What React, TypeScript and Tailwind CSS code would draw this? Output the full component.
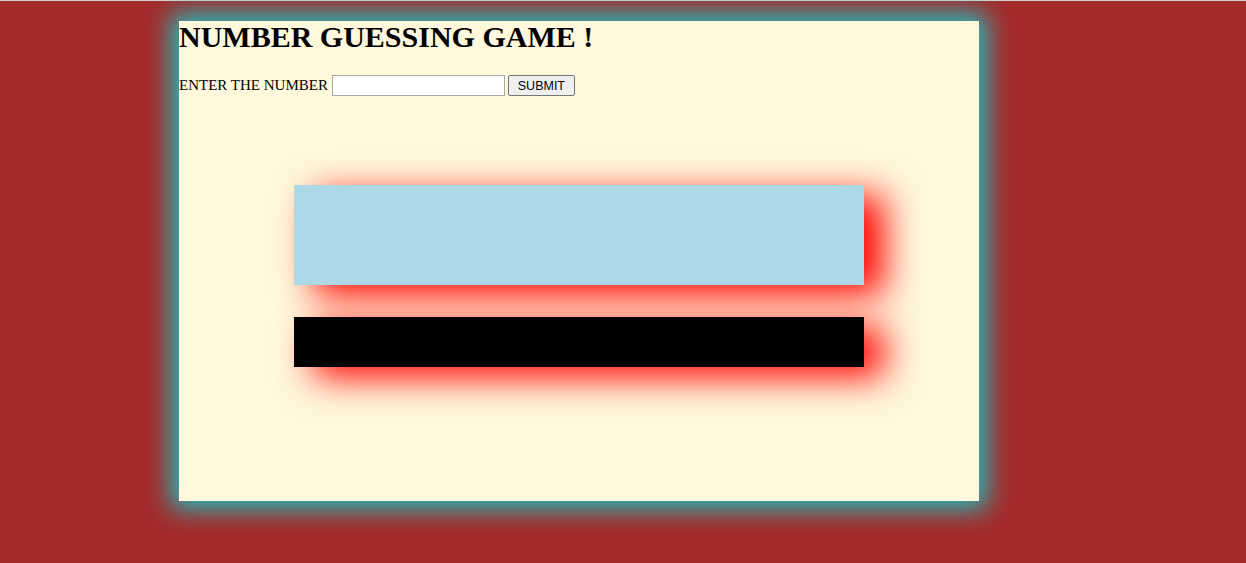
import React from 'react';

const App = () => {
  return (
    <div className="min-h-screen bg-[#a52a2a] overflow-hidden" style={{ fontFamily: '"Liberation Serif", serif' }}>
      <div className="h-px bg-[#d3d3d3]" />
      <div className="ml-[179px] mt-[20px] w-[800px] h-[480px] bg-[#fff8dc] shadow-[0_0_24px_8px_#1fbfc0] flex flex-col text-black">
        <h1 className="mt-[1px] text-[30px] font-bold leading-none mb-[23px]">NUMBER GUESSING GAME !</h1>
        <div className="flex items-center h-[21px] text-[15px] leading-normal">
          <span>ENTER THE NUMBER</span>
          <input type="text" className="ml-[4px] w-[173px] h-[21px] border border-[#a9a9a9] bg-white" />
          <button
            type="button"
            className="ml-[3px] w-[67px] h-[21px] pt-px border border-[#767676] rounded-[2px] bg-[#efefef] text-[12.5px] leading-none text-center"
            style={{ fontFamily: '"Liberation Sans", Arial, sans-serif' }}
          >
            SUBMIT
          </button>
        </div>
        <div className="mx-auto mt-[89px] w-[570px] h-[100px] bg-[#add8e6] shadow-[20px_10px_36px_red]" />
        <div className="mx-auto mt-[32px] w-[570px] h-[50px] bg-black shadow-[20px_10px_36px_red]" />
      </div>
    </div>
  );
};

export default App;
